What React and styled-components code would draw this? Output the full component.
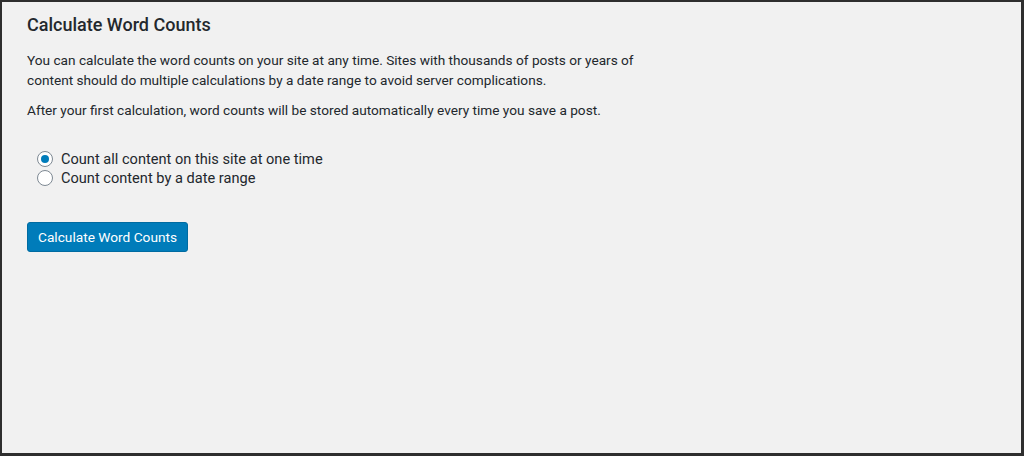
import React, { useState } from 'react';
import styled, { createGlobalStyle } from 'styled-components';

const GlobalStyle = createGlobalStyle`
  html, body {
    margin: 0;
    padding: 0;
    background: #f1f1f1;
  }
  body {
    font-family: Roboto, "Noto Sans", sans-serif;
    color: #23282d;
  }
`;

const Frame = styled.div`
  box-sizing: border-box;
  width: 1024px;
  height: 456px;
  background: #f1f1f1;
  border-style: solid;
  border-color: #2e2e2e;
  border-width: 2px 3px 3px 2px;
  padding: 11px 25px 0 25px;
`;

const Title = styled.h2`
  margin: 0;
  font-size: 18px;
  font-weight: 500;
  line-height: 24px;
`;

const Text = styled.p`
  margin: ${(p) => p.$top || 0}px 0 0;
  font-size: 13.65px;
  line-height: 20px;
  white-space: nowrap;
`;

const Options = styled.div`
  display: flex;
  flex-direction: column;
  gap: 3px;
  margin: 31px 0 0 10px;
`;

const Option = styled.label`
  display: flex;
  align-items: center;
  gap: 8px;
  font-size: 14.6px;
  line-height: 16px;
  cursor: pointer;
`;

const Radio = styled.span`
  box-sizing: border-box;
  width: 16px;
  height: 16px;
  border-radius: 50%;
  border: 1px solid #7e8993;
  background: #fff;
  display: flex;
  align-items: center;
  justify-content: center;

  &::after {
    content: '';
    width: 8px;
    height: 8px;
    border-radius: 50%;
    background: ${(p) => (p.$checked ? '#007cba' : 'transparent')};
  }
`;

const Button = styled.button`
  display: block;
  margin-top: 36px;
  height: 30px;
  padding: 0 10px;
  border: 1px solid #006ba1;
  border-radius: 3px;
  background: #007cba;
  color: #fff;
  font-family: Roboto, "Noto Sans", sans-serif;
  font-size: 13.7px;
  cursor: pointer;
`;

export default function App() {
  const [mode, setMode] = useState('all');

  return (
    <>
      <GlobalStyle />
      <Frame>
        <Title>Calculate Word Counts</Title>
        <Text $top={13}>
          You can calculate the word counts on your site at any time. Sites with thousands of posts or years of
          <br />
          content should do multiple calculations by a date range to avoid server complications.
        </Text>
        <Text $top={10}>
          After your first calculation, word counts will be stored automatically every time you save a post.
        </Text>
        <Options>
          <Option onClick={() => setMode('all')}>
            <Radio $checked={mode === 'all'} />
            Count all content on this site at one time
          </Option>
          <Option onClick={() => setMode('range')}>
            <Radio $checked={mode === 'range'} />
            Count content by a date range
          </Option>
        </Options>
        <Button>Calculate Word Counts</Button>
      </Frame>
    </>
  );
}
